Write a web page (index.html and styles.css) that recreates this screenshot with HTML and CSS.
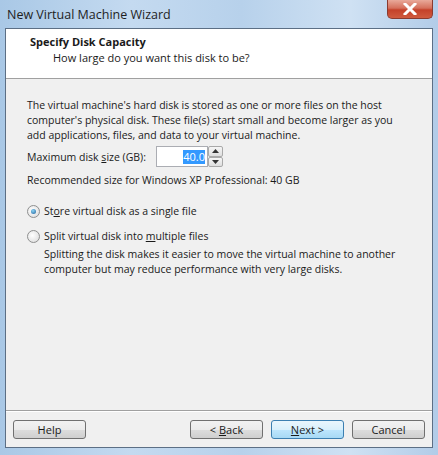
FILE: index.html
```html
<!DOCTYPE html>
<html lang="en">
<head>
    <meta charset="UTF-8">
    <title>New Virtual Machine Wizard</title>
    <link rel="stylesheet" href="styles.css">
</head>
<body>
    <div class="window">
        <div class="titlebar">
            <span class="title">New Virtual Machine Wizard</span>
            <div class="close">
                <svg width="14" height="12" viewBox="0 0 14 12">
                    <path d="M2 1 L12 11 M12 1 L2 11" stroke="#ffffff" stroke-width="3" stroke-linecap="square"/>
                </svg>
            </div>
        </div>
        <div class="client">
            <div class="header">
                <div class="header-title">Specify Disk Capacity</div>
                <div class="header-sub">How large do you want this disk to be?</div>
            </div>
            <div class="content">
                <p class="intro">The virtual machine's hard disk is stored as one or more files on the host<br>computer's physical disk. These file(s) start small and become larger as you<br>add applications, files, and data to your virtual machine.</p>
                <div class="size-row">
                    <span class="size-label">Maximum disk <u>s</u>ize (GB):</span>
                    <div class="spin">
                        <div class="spin-box"><span class="sel">40.0</span></div>
                        <div class="spin-btns">
                            <div class="spin-btn">
                                <svg width="7" height="4" viewBox="0 0 7 4"><path d="M0 4 L3.5 0 L7 4 Z" fill="#333"/></svg>
                            </div>
                            <div class="spin-btn">
                                <svg width="7" height="4" viewBox="0 0 7 4"><path d="M0 0 L3.5 4 L7 0 Z" fill="#333"/></svg>
                            </div>
                        </div>
                    </div>
                </div>
                <p class="recommend">Recommended size for Windows XP Professional: 40 GB</p>
                <label class="radio-row">
                    <span class="radio"><span class="dot"></span></span>
                    <span>St<u>o</u>re virtual disk as a single file</span>
                </label>
                <label class="radio-row second">
                    <span class="radio"></span>
                    <span>Split virtual disk into <u>m</u>ultiple files</span>
                </label>
                <p class="note">Splitting the disk makes it easier to move the virtual machine to another<br>computer but may reduce performance with very large disks.</p>
            </div>
            <div class="footer">
                <button class="btn">Help</button>
                <div class="spacer"></div>
                <button class="btn">&lt; <u>B</u>ack</button>
                <button class="btn default"><u>N</u>ext &gt;</button>
                <button class="btn">Cancel</button>
            </div>
        </div>
    </div>
</body>
</html>
```

FILE: styles.css
```css
body {
    margin: 0;
    font-family: "Open Sans", "Noto Sans", sans-serif;
    font-size: 10.5px;
    color: #1a1a1a;
}
.window {
    width: 438px;
    height: 455px;
    box-sizing: border-box;
    padding: 0 5px 7px 5px;
    display: flex;
    flex-direction: column;
    background: linear-gradient(90deg, #a9c8e6 0%, #c4daf0 30%, #b7d1eb 55%, #cfe1f3 80%, #b2cce8 100%);
}
.titlebar {
    height: 28px;
    display: flex;
    align-items: flex-start;
    position: relative;
}
.title {
    font-size: 12.5px;
    color: #1e1e1e;
    margin-top: 6px;
    margin-left: 2px;
}
.close {
    position: absolute;
    right: 0;
    top: 0;
    width: 46px;
    height: 19px;
    box-sizing: border-box;
    border: 1px solid #8a3b30;
    border-top: none;
    border-radius: 0 0 5px 5px;
    background: linear-gradient(#e9a99a 0%, #d5705c 45%, #c4412a 55%, #d05b3f 100%);
    display: flex;
    align-items: center;
    justify-content: center;
}
.client {
    flex: 1;
    display: flex;
    flex-direction: column;
    border: 1px solid #5c6f85;
    background: #f0f0f0;
}
.header {
    height: 50px;
    box-sizing: border-box;
    background: #ffffff;
    border-bottom: 1px solid #a0a0a0;
    padding: 4px 0 0 24px;
}
.header-title {
    font-weight: bold;
    font-size: 11px;
    line-height: 17px;
}
.header-sub {
    padding-left: 23px;
    font-size: 11px;
    line-height: 16px;
}
.content {
    flex: 1;
    padding: 19px 10px 0 21px;
}
.content p {
    margin: 0;
}
.intro {
    line-height: 15px;
}
.size-row {
    display: flex;
    align-items: center;
    margin-top: 3px;
}
.size-label {
    width: 129px;
}
.spin {
    display: flex;
    height: 21px;
}
.spin-box {
    width: 52px;
    box-sizing: border-box;
    border: 1px solid #abadb3;
    background: #ffffff;
    display: flex;
    align-items: center;
    justify-content: flex-end;
    padding-right: 2px;
}
.sel {
    background: #3399ff;
    color: #ffffff;
    font-size: 11px;
    line-height: 14px;
}
.spin-btns {
    display: flex;
    flex-direction: column;
    width: 15px;
}
.spin-btn {
    flex: 1;
    border: 1px solid #a9a9a9;
    border-radius: 2px;
    background: linear-gradient(#f6f6f6, #dedede);
    display: flex;
    align-items: center;
    justify-content: center;
}
.recommend {
    margin-top: 6px !important;
}
.radio-row {
    display: flex;
    align-items: center;
    gap: 4px;
    margin-top: 17px;
}
.radio-row.second {
    margin-top: 11px;
}
.radio {
    width: 11px;
    height: 11px;
    border-radius: 50%;
    border: 1px solid #8e8f8f;
    background: radial-gradient(circle at 40% 40%, #ffffff, #d8d8d8);
    display: flex;
    align-items: center;
    justify-content: center;
}
.dot {
    width: 5px;
    height: 5px;
    border-radius: 50%;
    background: radial-gradient(circle at 40% 35%, #8ad4f5, #1f5f9a);
}
.note {
    padding-left: 17px;
    margin-top: 4px !important;
    line-height: 15px;
}
.footer {
    height: 36px;
    border-top: 1px solid #a0a0a0;
    box-shadow: inset 0 1px 0 #ffffff;
    display: flex;
    align-items: center;
    gap: 8px;
    padding: 0 7px;
}
.spacer {
    flex: 1;
}
.btn {
    width: 73px;
    height: 19px;
    font-family: inherit;
    font-size: 11px;
    color: #1a1a1a;
    border: 1px solid #707070;
    border-radius: 3px;
    background: linear-gradient(#f2f2f2 0%, #ebebeb 50%, #dddddd 51%, #cfcfcf 100%);
    padding: 0;
}
.btn.default {
    border-color: #3c7fb1;
    background: linear-gradient(#eaf6fd 0%, #d9f0fc 50%, #bee6fd 51%, #a7d9f5 100%);
}
```
